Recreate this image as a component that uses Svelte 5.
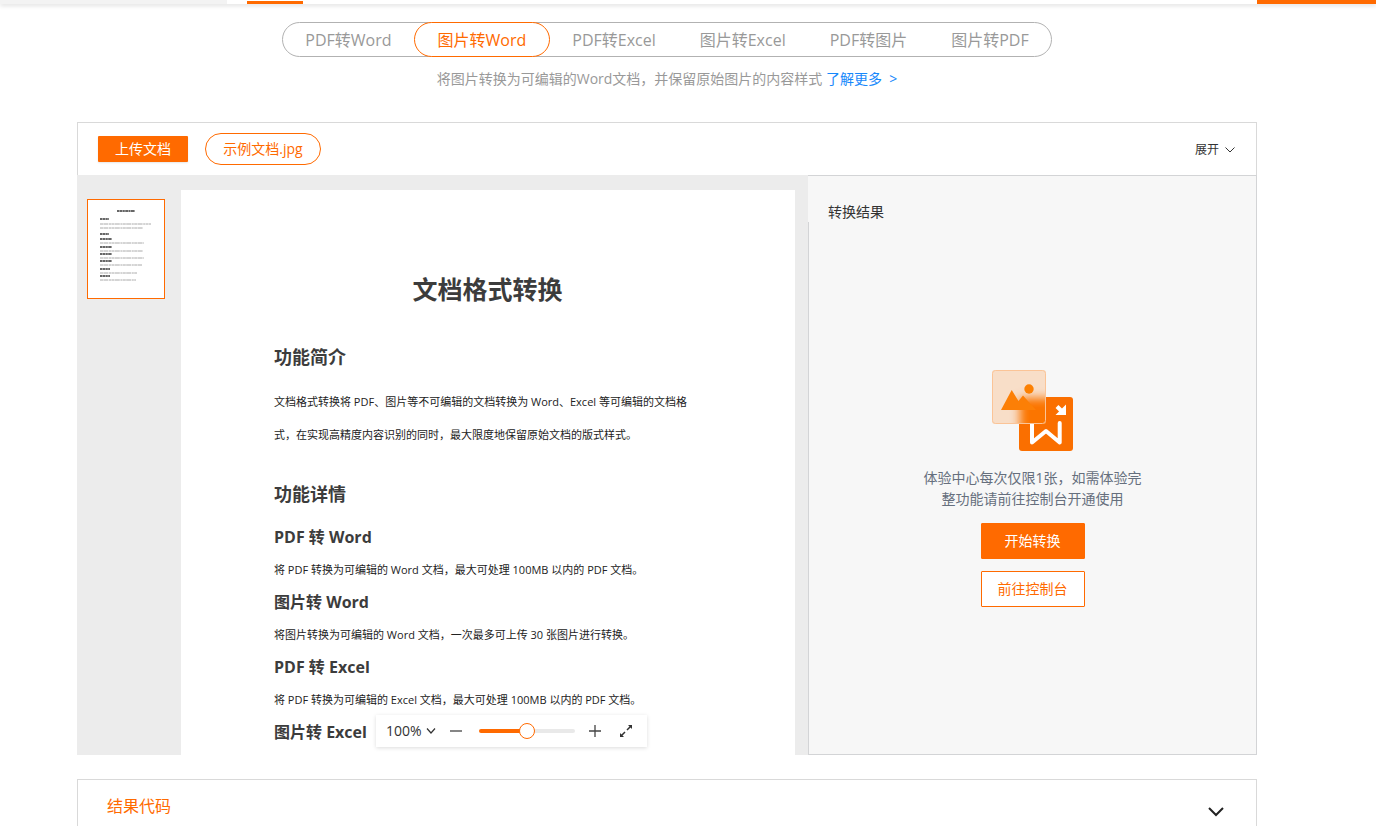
<script>
	const tabs = ['PDF转Word', '图片转Word', 'PDF转Excel', '图片转Excel', 'PDF转图片', '图片转PDF'];
	const sections = [
		{ title: 'PDF 转 Word', text: '将 PDF 转换为可编辑的 Word 文档，最大可处理 100MB 以内的 PDF 文档。' },
		{ title: '图片转 Word', text: '将图片转换为可编辑的 Word 文档，一次最多可上传 30 张图片进行转换。' },
		{ title: 'PDF 转 Excel', text: '将 PDF 转换为可编辑的 Excel 文档，最大可处理 100MB 以内的 PDF 文档。' },
		{ title: '图片转 Excel', text: '' }
	];
	// thumbnail rows: x, y, width, bold
	const rows = [
		[29, 11, 18, 1], [12, 19, 9, 1], [12, 24, 51, 0], [12, 28, 43, 0], [12, 34, 9, 1],
		[12, 39, 12, 1], [12, 43, 44, 0], [12, 47, 12, 1], [12, 51, 43, 0], [12, 54, 12, 1],
		[12, 58, 44, 0], [12, 61, 12, 1], [12, 65, 42, 0], [12, 69, 10, 1], [12, 73, 37, 0],
		[12, 76, 10, 1], [12, 80, 36, 0]
	];

	let active = $state(1);
	let zoom = $state(100);
	let fill = $derived(zoom / 2);
</script>

<div class="page">
	<header class="topbar">
		<div class="topbar-logo"></div>
		<div class="topbar-current"></div>
		<div class="topbar-action"></div>
	</header>

	<main>
		<div class="tabs" role="tablist">
			{#each tabs as tab, i}
				<button class="tab" class:active={active === i} role="tab" aria-selected={active === i} onclick={() => (active = i)}>{tab}</button>
			{/each}
		</div>
		<p class="intro">将图片转换为可编辑的Word文档，并保留原始图片的内容样式 <a href="#more">了解更多 &nbsp;&gt;</a></p>

		<section class="workspace">
			<div class="toolbar">
				<button class="upload">上传文档</button>
				<button class="sample">示例文档.jpg</button>
				<button class="expand">
					展开
					<svg width="10" height="6" viewBox="0 0 10 6"><path d="M.5 .5 5 5 9.500 .5" fill="none" stroke="currentColor" /></svg>
				</button>
			</div>

			<div class="content">
				<div class="viewer">
					<div class="thumbs">
						<button class="thumb" aria-label="1">
							<svg viewBox="0 0 76 98">
								{#each rows as [x, y, w, bold]}
									<line x1={x} x2={x + w} y1={y} y2={y} class:bold={bold} />
								{/each}
							</svg>
						</button>
					</div>
					<article class="paper">
						<h1>文档格式转换</h1>
						<h2>功能简介</h2>
						<p class="lead">文档格式转换将 PDF、图片等不可编辑的文档转换为 Word、Excel 等可编辑的文档格<br />式，在实现高精度内容识别的同时，最大限度地保留原始文档的版式样式。</p>
						<h2>功能详情</h2>
						{#each sections as s}
							<h3>{s.title}</h3>
							<p>{s.text}</p>
						{/each}
					</article>

					<div class="zoombar">
						<label class="zoom-level">
							<select bind:value={zoom} aria-label="100%">
								<option value={50}>50%</option>
								<option value={100}>100%</option>
								<option value={200}>200%</option>
							</select>
							<svg width="10" height="6" viewBox="0 0 10 6"><path d="M1 .5 5 5 9 .5" fill="none" stroke="#333" stroke-width="1.200" /></svg>
						</label>
						<button aria-label="−" onclick={() => (zoom = Math.max(0, zoom - 10))}>
							<svg width="12" height="12" viewBox="0 0 12 12"><path d="M0 6h12" stroke="#444" stroke-width="1.300" /></svg>
						</button>
						<input type="range" min="0" max="200" bind:value={zoom} aria-label="%" style="--fill: {fill}%" />
						<button aria-label="+" onclick={() => (zoom = Math.min(200, zoom + 10))}>
							<svg width="12" height="12" viewBox="0 0 12 12"><path d="M0 6h12M6 0v12" stroke="#444" stroke-width="1.300" /></svg>
						</button>
						<button class="fullscreen" aria-label="⤢">
							<svg width="14" height="14" viewBox="0 0 14 14">
								<path d="M8 6 11.500 2.500M6 8 2.500 11.500" stroke="#333" stroke-width="1.500" />
								<path d="M9 1H13v4zM1 9V13h4z" fill="#333" />
							</svg>
						</button>
					</div>
				</div>

				<aside class="result">
					<h4>转换结果</h4>
					<div class="result-body">
						<svg class="art" width="82" height="82" viewBox="0 0 82 82">
							<defs>
								<filter id="soft" x="-50%" y="-50%" width="200%" height="200%"><feGaussianBlur stdDeviation="5" /></filter>
								<clipPath id="front"><rect width="54" height="54" rx="3" /></clipPath>
							</defs>
							<rect x="27" y="27" width="54" height="54" rx="3" fill="#fa6f00" />
							<path d="M40 51v21.500L54 61l13.700 11.500V53" fill="none" stroke="#fff" stroke-width="4" stroke-linecap="round" stroke-linejoin="round" />
							<path d="M65 36.500l6 6" stroke="#fff" stroke-width="4" />
							<path d="M74 34.500v10.500H63.500z" fill="#fff" />
							<g clip-path="url(#front)">
								<rect width="54" height="54" fill="#f8dec8" />
								<rect x="28" y="28" width="40" height="40" fill="#fb7400" filter="url(#soft)" />
							</g>
							<rect x=".5" y=".5" width="53" height="53" rx="3" fill="none" stroke="#fbc497" />
							<path d="M9 40 19.700 20l6.800 11 4.500-5.500L44 40z" fill="#fc7f06" />
							<circle cx="37" cy="19" r="4.700" fill="#fc8003" />
						</svg>
						<p>体验中心每次仅限1张，如需体验完<br />整功能请前往控制台开通使用</p>
						<button class="start">开始转换</button>
						<button class="console">前往控制台</button>
					</div>
				</aside>
			</div>
		</section>

		<section class="code">
			<h4>结果代码</h4>
			<svg width="16" height="10" viewBox="0 0 16 10"><path d="M1 1 8 8 15 1" fill="none" stroke="#222" stroke-width="2" /></svg>
		</section>
	</main>
</div>

<style>
	:global(body) {
		margin: 0;
		background: #fff;
	}

	.page {
		height: 100vh;
		overflow: hidden;
		font: 14px/20px 'Open Sans', 'Noto Sans CJK SC', sans-serif;
		color: #333;
	}

	h1, h2, h3, h4, p {
		margin: 0;
	}

	button {
		box-sizing: border-box;
		padding: 0;
		border: 0;
		background: none;
		color: inherit;
		font: inherit;
		cursor: pointer;
	}

	svg {
		display: block;
	}

	.topbar {
		display: flex;
		align-items: flex-end;
		height: 4px;
		box-shadow: 0 2px 4px rgba(0, 0, 0, 0.12);
	}

	.topbar-logo {
		width: 227px;
		height: 4px;
		background: #f3f3f3;
	}

	.topbar-current {
		width: 56px;
		height: 3px;
		margin-left: 20px;
		background: #ff6a00;
	}

	.topbar-action {
		width: 119px;
		height: 4px;
		margin-left: auto;
		background: #ff6a00;
	}

	main {
		max-width: 1180px;
		margin: 0 auto;
		padding: 18px 42px 0 0;
	}

	.tabs {
		display: flex;
		box-sizing: border-box;
		width: fit-content;
		height: 35px;
		margin: 0 auto;
		border: 1px solid #b2b2b2;
		border-radius: 18px;
	}

	.tab {
		height: 35px;
		margin-top: -1px;
		padding: 0 22px;
		border-radius: 18px;
		color: #999;
		font-size: 16px;
	}

	.tab.active {
		padding: 0 23px;
		border: 1px solid #ff6a00;
		background: #fff;
		color: #ff6a00;
	}

	.intro {
		margin-top: 12px;
		color: #999;
		text-align: center;
	}

	.intro a {
		color: #1788fb;
		text-decoration: none;
	}

	.workspace {
		margin-top: 33px;
		border-top: 1px solid #d9d9d9;
	}

	.toolbar {
		display: flex;
		align-items: center;
		height: 52px;
		padding: 0 20px;
		border: solid #d9d9d9;
		border-width: 0 1px;
	}

	.upload {
		width: 90px;
		height: 26px;
		border-radius: 1px;
		background: #ff6a00;
		color: #fff;
		box-shadow: 0 1px 2px rgba(0, 0, 0, 0.1);
	}

	.sample {
		width: 116px;
		height: 32px;
		margin-left: 17px;
		border: 1px solid #ff6a00;
		border-radius: 16px;
		color: #ff6a00;
	}

	.expand {
		display: flex;
		align-items: center;
		gap: 6px;
		margin-left: auto;
		padding: 2px 1px 0 0;
		font-size: 12px;
	}

	.content {
		display: flex;
		height: 580px;
	}

	.viewer {
		position: relative;
		display: flex;
		flex: 1;
		box-sizing: border-box;
		padding: 15px 13px 0 10px;
		background: #ececec;
		overflow: hidden;
	}

	.thumbs {
		width: 94px;
		padding-top: 9px;
	}

	.thumb {
		width: 78px;
		height: 100px;
		border: 1px solid #ff6a00;
		background: #fff;
	}

	.thumb line {
		stroke: #aaa;
		stroke-dasharray: 3 0.4 5 0.6 2 0.4;
	}

	.thumb line.bold {
		stroke: #666;
		stroke-width: 2;
		stroke-dasharray: 2 0.4 3 0.4;
	}

	.paper {
		flex: 1;
		padding: 80px 94px 0 93px;
		background: #fff;
		color: #3c3c3c;
		white-space: nowrap;
	}

	.paper h1 {
		font-size: 25px;
		line-height: 38px;
		text-align: center;
	}

	.paper h2 {
		margin-top: 34px;
		font-size: 18px;
		line-height: 30px;
	}

	.paper h3 {
		font-size: 16px;
		line-height: 32px;
	}

	.paper p {
		color: #222;
		font-size: 11px;
		line-height: 33px;
	}

	.paper .lead {
		margin-top: 13px;
	}

	.paper .lead + h2 {
		margin: 28px 0 12px;
	}

	.zoombar {
		position: absolute;
		bottom: 8px;
		left: 299px;
		display: flex;
		align-items: center;
		gap: 14px;
		box-sizing: border-box;
		width: 271px;
		height: 32px;
		padding: 0 10px;
		background: #fff;
		box-shadow: 0 1px 4px rgba(0, 0, 0, 0.14);
	}

	.zoom-level {
		display: flex;
		align-items: center;
	}

	.zoom-level select {
		width: 40px;
		padding: 0;
		border: 0;
		appearance: none;
		background: none;
		color: #333;
		font: inherit;
	}

	.zoombar input {
		width: 96px;
		height: 16px;
		margin: 0 0 0 3px;
		appearance: none;
		background: none;
	}

	.zoombar input::-webkit-slider-runnable-track {
		height: 4px;
		border-radius: 2px;
		background: linear-gradient(to right, #ff6a00 var(--fill), #e9e9e9 var(--fill));
	}

	.zoombar input::-webkit-slider-thumb {
		width: 16px;
		height: 16px;
		margin-top: -6px;
		border: 1px solid #ff6a00;
		border-radius: 50%;
		appearance: none;
		background: #fff;
	}

	.zoombar .fullscreen {
		margin-left: 4px;
	}

	.result {
		box-sizing: border-box;
		width: 449px;
		border: 1px solid #d3d4d6;
		background: #f7f7f7;
	}

	.result h4 {
		margin-left: -1px;
		padding: 26px 20px 0;
		background: #f7f7f7;
		font-weight: 400;
	}

	.result-body {
		display: flex;
		flex-direction: column;
		align-items: center;
		padding-top: 148px;
	}

	.result-body p {
		margin: 15px 0 14px;
		color: #666f7d;
		line-height: 21px;
		text-align: center;
	}

	.start,
	.console {
		width: 104px;
		height: 36px;
		border: 1px solid #ff6a00;
		border-radius: 1px;
		background: #ff6a00;
		color: #fff;
	}

	.console {
		margin-top: 12px;
		background: #fff;
		color: #ff6a00;
	}

	.code {
		display: flex;
		align-items: center;
		justify-content: space-between;
		height: 52px;
		margin-top: 24px;
		padding: 0 32px 0 29px;
		border: 1px solid #d9d9d9;
		border-bottom: 0;
	}

	.code h4 {
		color: #ff6a00;
		font-size: 16px;
		font-weight: 400;
	}

	.code svg {
		margin-top: 12px;
	}
</style>
